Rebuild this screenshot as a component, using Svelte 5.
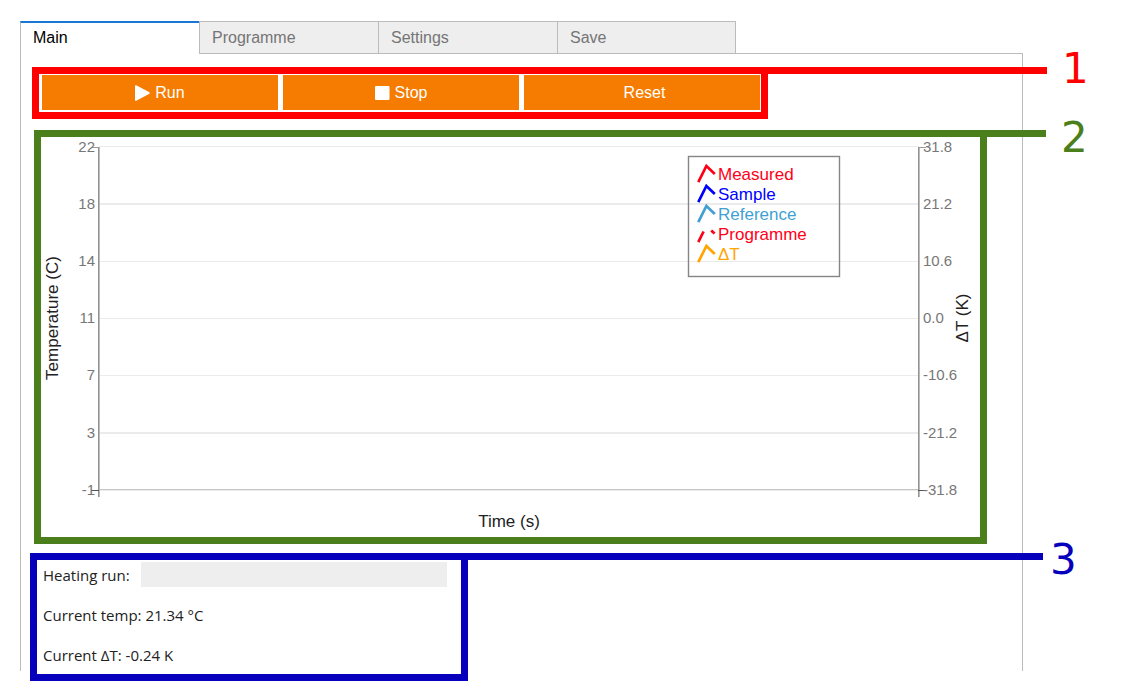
<script>
  const tabs = ['Main', 'Programme', 'Settings', 'Save'];
  let active = $state('Main');

  const ticks = [
    { y: 10, left: '22', right: '31.8' },
    { y: 67, left: '18', right: '21.2' },
    { y: 124, left: '14', right: '10.6' },
    { y: 181, left: '11', right: '0.0' },
    { y: 238, left: '7', right: '-10.6' },
    { y: 296, left: '3', right: '-21.2' },
    { y: 353, left: '-1', right: '-31.8' }
  ];

  const series = [
    { name: 'Measured', color: '#ff0018' },
    { name: 'Sample', color: '#0000ff' },
    { name: 'Reference', color: '#419fd4' },
    { name: 'Programme', color: '#ff0018', dashed: true },
    { name: 'ΔT', color: '#ffa500' }
  ];
</script>

<main class="page">
  <div class="tabs" role="tablist">
    {#each tabs as tab}
      <button
        class="tab"
        class:active={tab === active}
        role="tab"
        aria-selected={tab === active}
        onclick={() => (active = tab)}>{tab}</button>
    {/each}
    <span class="rule"></span>
  </div>

  <div class="panel" role="tabpanel">
    <section class="region controls">
      <div class="frame">
        <button class="action">
          <svg width="15" height="16" viewBox="0 0 15 16" aria-hidden="true">
            <path d="M0 1.2Q0 -.2 1.2 .3L14 7Q15.6 8 14 9L1.2 15.7Q0 16.2 0 14.8Z" fill="#fff" />
          </svg>
          Run
        </button>
        <button class="action">
          <svg width="15" height="16" viewBox="0 0 15 16" aria-hidden="true">
            <rect y="1" width="14.5" height="14" rx="1" fill="#fff" />
          </svg>
          Stop
        </button>
        <button class="action plain">Reset</button>
      </div>
      <div class="lead"><span class="number">1</span></div>
    </section>

    <section class="region plot">
      <div class="frame">
        <svg class="chart" viewBox="0 0 939 400" role="img" aria-label="Temperature and ΔT over time">
          {#each ticks as t, i}
            <rect x="58" y={i === 1 || i === 5 ? t.y - 1 : t.y - (i === 0 ? 1 : 0)} width="820" height={i === 1 || i === 5 ? 2 : 1} fill="#ebebeb" />
          {/each}
          <rect x="57" y="352" width="821" height="1" fill="#c6c6c6" />

          <g class="axes">
            <rect x="57" y="10" width="1" height="350" fill="#929292" />
            <rect x="58" y="10" width="1" height="350" fill="#bbb" />
            <rect x="877" y="10" width="1" height="350" fill="#929292" />
            <rect x="878" y="10" width="1" height="350" fill="#bbb" />
            <rect x="51" y="10" width="7" height="1" fill="#999" />
            <rect x="878" y="10" width="7" height="1" fill="#999" />
            <rect x="50" y="353" width="8" height="1" fill="#555" />
            <rect x="877" y="353" width="8" height="1" fill="#555" />
          </g>

          {#each ticks as t}
            <text class="tick" x="54" y={t.y + 5} text-anchor="end">{t.left}</text>
            <text class="tick" x="882" y={t.y + 5}>{t.right}</text>
          {/each}

          <text class="title" transform="translate(17 181) rotate(-90)" text-anchor="middle">Temperature (C)</text>
          <text class="title" transform="translate(927 181) rotate(-90)" text-anchor="middle">ΔT (K)</text>
          <text class="title" x="468" y="390" text-anchor="middle">Time (s)</text>

          <g transform="translate(647 19)">
            <rect x=".5" y=".5" width="151" height="120" fill="none" stroke="#858585" stroke-width="1.4" />
            {#each series as s, i}
              <g transform="translate(0 {i * 20})">
                {#if s.dashed}
                  <path d="M10.3 26.2L15.6 15.5M23.2 14.4L26.6 17.6" stroke={s.color} stroke-width="2.7" fill="none" />
                {:else}
                  <path d="M10.3 26.2L18.4 10L26.8 18" stroke={s.color} stroke-width="2.7" fill="none" />
                {/if}
                <text class="series" x="30" y="24" fill={s.color}>{s.name}</text>
              </g>
            {/each}
          </g>
        </svg>
      </div>
      <div class="lead"><span class="number">2</span></div>
    </section>

    <section class="region status">
      <div class="frame">
        <div class="row">
          <label for="run-progress">Heating run:</label>
          <progress id="run-progress" value="0" max="100"></progress>
        </div>
        <div class="row">Current temp: 21.34 °C</div>
        <div class="row">Current ΔT: -0.24 K</div>
      </div>
      <div class="lead"><span class="number">3</span></div>
    </section>
  </div>
</main>

<style>
  :global(body) {
    margin: 0;
    background: #fff;
  }

  .page {
    padding: 21px 110px 28px 20px;
    font: 16px/20px "Liberation Sans", Arial, sans-serif;
    color: #222;
  }

  button {
    margin: 0;
    border: 0;
    border-radius: 0;
    font: inherit;
    cursor: pointer;
  }

  .tabs {
    display: flex;
  }

  .tab {
    box-sizing: border-box;
    flex: 0 1 179px;
    height: 33px;
    padding: 0 12px;
    border: 1px solid #bbb;
    border-right: 0;
    background: #eee;
    color: #757575;
    text-align: left;
  }

  .tab:nth-of-type(4) {
    border-right: 1px solid #bbb;
  }

  .tab.active {
    padding-bottom: 2px;
    border-top: 2px solid #1976d2;
    border-bottom: 0;
    background: #fff;
    color: #000;
  }

  .rule {
    flex: 1;
    border-bottom: 1px solid #bbb;
  }

  .panel {
    display: flow-root;
    padding-top: 13px;
    border: solid #bbb;
    border-width: 0 1px;
  }

  .region {
    position: relative;
  }

  .frame {
    box-sizing: border-box;
    border: 7px solid var(--mark);
  }

  /* Callout line running past the panel edge to its number */
  .lead {
    position: absolute;
    top: 0;
    height: 7px;
    background: var(--mark);
  }

  .number {
    position: absolute;
    left: 100%;
    color: var(--mark);
    font: 42px/42px "DejaVu Sans", Verdana, sans-serif;
  }

  .controls {
    --mark: #f00;
  }

  .controls .frame {
    display: flex;
    gap: 5px;
    max-width: 736px;
    margin-left: 11px;
    padding: 1px 1px 2px 3px;
  }

  .controls .lead {
    left: 11px;
    right: -25px;
  }

  .controls .number {
    top: -19px;
    margin-left: 15px;
  }

  .action {
    box-sizing: border-box;
    display: flex;
    flex: 1 1 0;
    align-items: center;
    justify-content: center;
    gap: 5px;
    width: 0;
    height: 35px;
    padding: 0;
    background: #f57c00;
    color: #fff;
  }

  /* Label without an icon keeps the space that follows an icon */
  .action.plain::before {
    content: "";
  }

  .plot {
    --mark: #4a7f1b;
    margin-top: 11px;
  }

  .plot .frame {
    margin: 0 35px 0 13px;
  }

  .plot .lead {
    left: 13px;
    right: -24px;
  }

  .plot .number {
    top: -13px;
    margin-left: 15px;
  }

  .chart {
    display: block;
    width: 100%;
  }

  .chart text {
    font-family: "Liberation Sans", Arial, sans-serif;
  }

  .tick {
    font-size: 15px;
    fill: #777;
  }

  .title {
    font-size: 17px;
    fill: #222;
  }

  .series {
    font-size: 17px;
  }

  .status {
    --mark: #0600bd;
    margin-top: 9px;
    margin-bottom: -10px;
  }

  .status .frame {
    max-width: 438px;
    margin-left: 9px;
    padding: 0 14px 4px 6px;
    font: 15px/30px "Open Sans", "Segoe UI", sans-serif;
  }

  .status .lead {
    left: 9px;
    right: -21px;
  }

  .status .number {
    top: -14px;
    margin-left: 7px;
  }

  .row {
    display: flex;
    align-items: center;
    gap: 11px;
    height: 30px;
  }

  .row + .row {
    margin-top: 10px;
  }

  progress {
    flex: 1;
    height: 25px;
    min-width: 0;
    margin-bottom: 1px;
    border: 0;
    background: #eee;
    appearance: none;
  }

  progress::-webkit-progress-bar {
    background: #eee;
  }

  progress::-webkit-progress-value {
    background: #1976d2;
  }
</style>
